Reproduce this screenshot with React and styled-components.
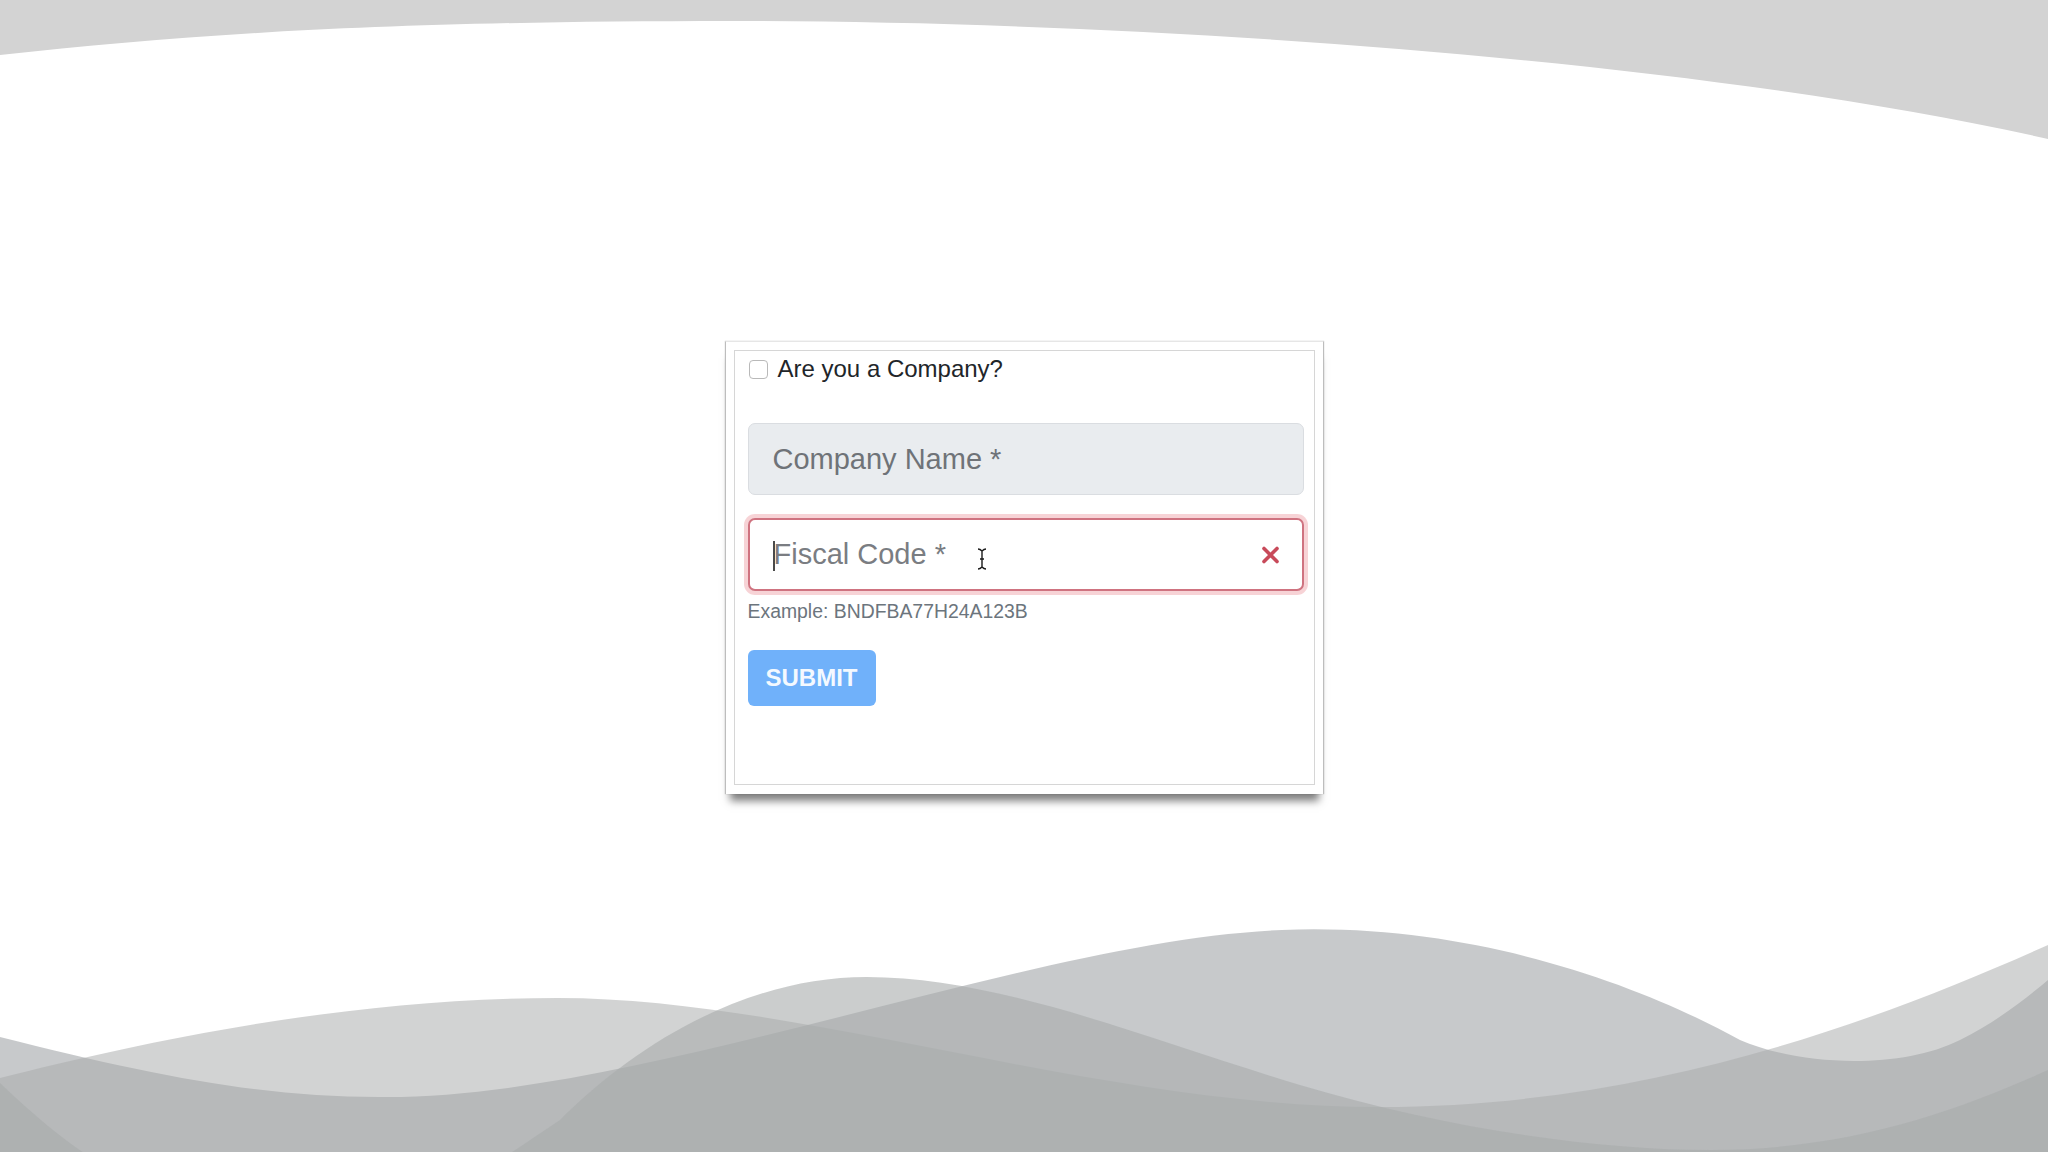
import React from "react";
import styled, { createGlobalStyle } from "styled-components";

const GlobalStyle = createGlobalStyle`
  html, body { margin: 0; padding: 0; background: #ffffff; overflow: hidden; }
  body { font-family: "Liberation Sans", Arial, Helvetica, sans-serif; }
  * { box-sizing: border-box; }
`;

const Page = styled.div`
  position: relative;
  width: 100vw;
  height: 100vh;
  display: flex;
  align-items: center;
  justify-content: center;
  padding-bottom: 17px;
  background: #ffffff;
  overflow: hidden;
`;

const Backdrop = styled.svg`
  position: absolute;
  inset: 0;
  width: 100%;
  height: 100%;
  z-index: 0;
  pointer-events: none;
`;

const Paper = styled.div`
  position: relative;
  z-index: 1;
  width: 599px;
  padding: 8px 8px 9px 8px;
  background: #ffffff;
  border-left: 1px solid #bdbdbd;
  border-right: 1px solid #bdbdbd;
  border-top: 1px solid #e6e6e6;
  box-shadow: 0 0 1px rgba(0, 0, 0, 0.25), 0 12px 8px -5px rgba(0, 0, 0, 0.5);
`;

const Frame = styled.div`
  display: flex;
  flex-direction: column;
  align-items: stretch;
  border: 1px solid #d6d6d6;
  padding: 0 10px 78px 13px;
`;

const CheckRow = styled.label`
  display: flex;
  align-items: center;
  gap: 10px;
  height: 36px;
  margin-bottom: 36px;
  font-size: 24px;
  color: #212529;
`;

const Box = styled.span`
  width: 19px;
  height: 19px;
  margin-left: 1px;
  border: 1px solid #b9b9b9;
  border-radius: 4px;
  background: #ffffff;
  flex: none;
`;

const Group = styled.div`
  display: flex;
  flex-direction: column;
  margin-bottom: ${(p) => p.$gap}px;
`;

const InputWrap = styled.div`
  position: relative;
  display: flex;
`;

const TextInput = styled.input`
  width: 100%;
  height: ${(p) => (p.$invalid ? 73 : 72)}px;
  padding: 0 ${(p) => (p.$invalid ? 60 : 24)}px 0 24px;
  font-family: "Liberation Sans", Arial, Helvetica, sans-serif;
  font-size: 29px;
  color: #495057;
  background: ${(p) => (p.disabled ? "#e9ecef" : "#ffffff")};
  border: ${(p) => (p.$invalid ? "2px solid #cf7380" : "1px solid #dadde1")};
  border-radius: 7px;
  outline: none;
  box-shadow: ${(p) => (p.$invalid ? "0 0 0 4px rgba(220, 53, 69, 0.22)" : "none")};
  &::placeholder {
    color: ${(p) => (p.$invalid ? "#7a7d82" : "#6f7378")};
    opacity: 1;
  }
`;

const Caret = styled.span`
  position: absolute;
  left: 25px;
  top: 23px;
  width: 2px;
  height: 30px;
  background: #4a4a4a;
`;

const IconSlot = styled.span`
  position: absolute;
  top: 50%;
  right: ${(p) => p.$right}px;
  left: ${(p) => (p.$left != null ? `${p.$left}px` : "auto")};
  transform: translateY(-50%);
  display: flex;
  margin-top: ${(p) => p.$dy || 0}px;
`;

const Help = styled.small`
  margin-top: 6px;
  font-size: 19.4px;
  line-height: 29px;
  color: #6c757d;
`;

const SubmitButton = styled.button`
  align-self: flex-start;
  height: 56px;
  padding: 0 18px;
  font-family: "Liberation Sans", Arial, Helvetica, sans-serif;
  font-size: 24px;
  font-weight: 700;
  color: #f4f9ff;
  background: #70b1fa;
  border: none;
  border-radius: 6px;
`;

function Waves() {
  return (
    <Backdrop viewBox="0 0 2048 1152" preserveAspectRatio="none">
      <path
        d="M0,0 H2048 V139 C1700,60 1150,21 731,21 C400,21 200,33 0,55 Z"
        fill="#d3d3d3"
      />
      <path
        d="M0,1037 C150,1075 260,1097 379,1097 C640,1100 1030,940 1282,930 C1480,922 1650,990 1740,1040 C1800,1066 1900,1070 1960,1040 C2000,1020 2030,995 2048,980 V1152 H0 Z"
        fill="#a6a9ad"
        fillOpacity="0.63"
      />
      <path
        d="M0,1078 C150,1040 350,998 558,998 C800,998 1100,1107 1380,1107 C1650,1107 1880,1020 2048,945 V1152 H0 Z"
        fill="#a9abab"
        fillOpacity="0.52"
      />
      <path
        d="M0,1083 C60,1140 150,1220 300,1220 C420,1220 470,1180 560,1120 C640,1040 750,977 867,977 C1000,977 1150,1040 1300,1085 C1450,1130 1600,1150 1711,1150 C1850,1150 1960,1110 2048,1070 V1152 H0 Z"
        fill="#a9abab"
        fillOpacity="0.6"
      />
    </Backdrop>
  );
}

export default function App() {
  return (
    <>
      <GlobalStyle />
      <Page>
        <Waves />
        <Paper>
          <Frame>
            <CheckRow>
              <Box />
              Are you a Company?
            </CheckRow>
            <Group $gap={23}>
              <TextInput disabled placeholder="Company Name *" />
            </Group>
            <Group $gap={24}>
              <InputWrap>
                <TextInput $invalid placeholder="Fiscal Code *" />
                <Caret />
                <IconSlot $left={229} $dy={4}>
                  <svg width="10" height="22" viewBox="0 0 10 22">
                    <path
                      d="M1,1 C3,1 4,2 5,3 C6,2 7,1 9,1 M5,3 V19 M1,21 C3,21 4,20 5,19 C6,20 7,21 9,21 M3,11 H7"
                      fill="none"
                      stroke="#1a1a1a"
                      strokeWidth="1.4"
                    />
                  </svg>
                </IconSlot>
                <IconSlot $right={24}>
                  <svg width="19" height="19" viewBox="0 0 19 19">
                    <path
                      d="M3,3 L16,16 M16,3 L3,16"
                      stroke="#c84a5a"
                      strokeWidth="3.6"
                      strokeLinecap="round"
                    />
                  </svg>
                </IconSlot>
              </InputWrap>
              <Help>Example: BNDFBA77H24A123B</Help>
            </Group>
            <SubmitButton disabled>SUBMIT</SubmitButton>
          </Frame>
        </Paper>
      </Page>
    </>
  );
}
